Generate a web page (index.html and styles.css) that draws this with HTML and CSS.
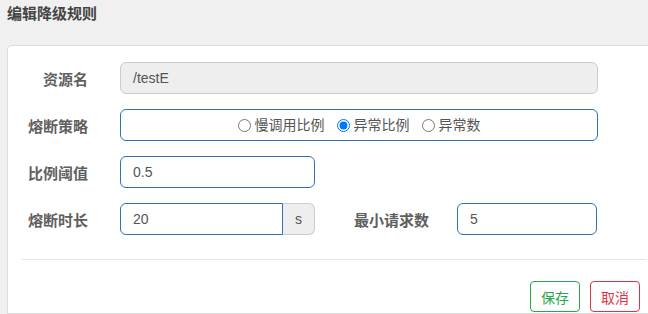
FILE: index.html
```html
<!DOCTYPE html>
<html lang="zh">
<head>
<meta charset="utf-8">
<title>编辑降级规则</title>
<link rel="stylesheet" href="styles.css">
</head>
<body>
<div class="dialog">
  <div class="dialog-title">编辑降级规则</div>
  <div class="card">
    <form class="form">
      <div class="row">
        <label class="label">资源名</label>
        <div class="control wide disabled">/testE</div>
      </div>
      <div class="row">
        <label class="label">熔断策略</label>
        <div class="control wide radios">
          <label class="radio"><input type="radio" name="grade">慢调用比例</label>
          <label class="radio"><input type="radio" name="grade" checked>异常比例</label>
          <label class="radio"><input type="radio" name="grade">异常数</label>
        </div>
      </div>
      <div class="row">
        <label class="label">比例阈值</label>
        <div class="control narrow">0.5</div>
      </div>
      <div class="row">
        <label class="label">熔断时长</label>
        <div class="group">
          <div class="control group-input">20</div>
          <div class="addon">s</div>
        </div>
        <label class="label label-2">最小请求数</label>
        <div class="control small">5</div>
      </div>
    </form>
    <div class="divider"></div>
    <div class="footer">
      <button type="button" class="btn btn-save">保存</button>
      <button type="button" class="btn btn-cancel">取消</button>
    </div>
  </div>
</div>
</body>
</html>
```

FILE: styles.css
```css
* { box-sizing: border-box; }

html, body {
  margin: 0;
  padding: 0;
  background: #f0f0f0;
  overflow: hidden;
}

body {
  width: 648px;
  height: 314px;
  font-family: "Liberation Sans", Arial, "Noto Sans CJK SC", sans-serif;
  color: #555;
}

.dialog-title {
  height: 45px;
  padding: 5px 7px 0;
  font-size: 15px;
  line-height: 17px;
  font-weight: bold;
  color: #444;
}

.card {
  margin-left: 7px;
  margin-right: -8px;
  background: #fff;
  border: 1px solid #dcdcdc;
  border-right: none;
  border-radius: 5px 0 0 0;
  height: 269px;
}

.form {
  padding-top: 16px;
}

.row {
  display: flex;
  align-items: center;
  height: 32px;
  margin-bottom: 15px;
}

.label {
  width: 80px;
  text-align: right;
  font-size: 15px;
  font-weight: bold;
  color: #5f5f5f;
  margin-right: 32px;
  flex: none;
}

.label-2 {
  width: auto;
  margin-left: 39px;
  margin-right: 28px;
}

.control {
  height: 32px;
  border: 1px solid #2f73b6;
  border-radius: 6px;
  padding: 0 12px;
  font-size: 14px;
  line-height: 30px;
  color: #555;
  background: #fff;
}

.wide { width: 478px; }
.narrow { width: 195px; }
.small { width: 140px; }

.disabled {
  background: #eeeeee;
  border-color: #cccccc;
}

.radios {
  display: flex;
  justify-content: center;
  align-items: center;
  padding: 0;
}

.radio {
  display: flex;
  align-items: center;
  font-size: 14px;
  color: #555;
}

.radio input {
  margin: 0 4px 0 12px;
  width: 13px;
  height: 13px;
}

.radio:first-child input {
  margin-left: 0;
}

.group {
  display: flex;
  width: 195px;
}

.group-input {
  width: 163px;
  border-radius: 6px 0 0 6px;
}

.addon {
  width: 32px;
  height: 32px;
  border: 1px solid #cccccc;
  border-left: none;
  border-radius: 0 6px 6px 0;
  background: #eeeeee;
  font-size: 14px;
  line-height: 30px;
  text-align: center;
  color: #555;
}

.divider {
  margin: 24px 10px 0 14px;
  border-top: 1px solid #e5e5e5;
}

.footer {
  display: flex;
  justify-content: flex-end;
  gap: 10px;
  padding: 21px 16px 0 0;
}

.btn {
  width: 50px;
  height: 31px;
  padding: 0;
  background: #fff;
  border: 1px solid;
  border-radius: 4px;
  font-family: "Liberation Sans", "Noto Sans CJK SC", sans-serif;
  font-size: 14px;
  cursor: pointer;
}

.btn-save {
  color: #28a745;
  border-color: #28a745;
}

.btn-cancel {
  color: #dc3545;
  border-color: #dc3545;
}
```
